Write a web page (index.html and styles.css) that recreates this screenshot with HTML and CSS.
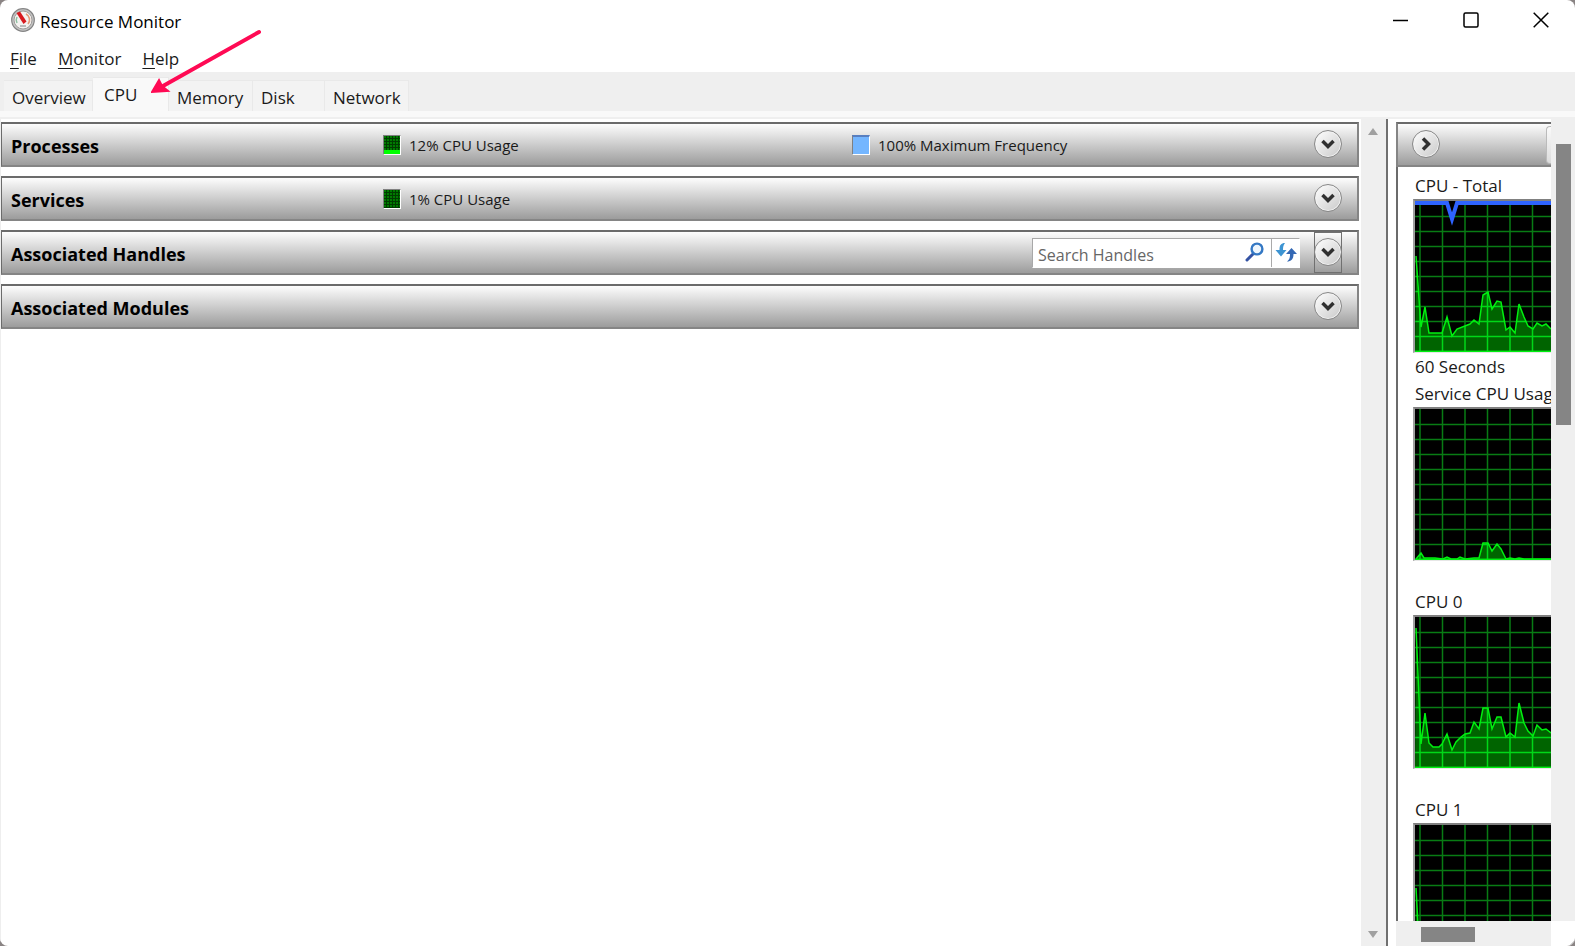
FILE: index.html
```
<!DOCTYPE html>
<html lang="en">
<head>
    <meta charset="UTF-8">
    <meta name="viewport" content="width=device-width, initial-scale=1.0">
    <title>Resource Monitor</title>
    <link rel="stylesheet" href="styles.css">
</head>
<body>

<div class="window">
    <header class="titlebar">
        <svg class="app-icon" width="24" height="24" viewBox="0 0 24 24">
            <circle cx="12" cy="12" r="11.3" fill="#c4c4c4" stroke="#858585" stroke-width="1.2"/>
            <circle cx="12" cy="12" r="9" fill="#f4f2f0" stroke="#a09c9a"/>
            <path d="M6 15a6.5 6.5 0 0 1 0-6" fill="none" stroke="#8cbfa0" stroke-width="1.5"/>
            <path d="M15 6a6.5 6.5 0 0 1 2 10" fill="none" stroke="#e59a78" stroke-width="1.6"/>
            <path d="M5.500 5l3.500-1.500 6.500 10-3 2.500z" fill="#d8191f"/>
            <path d="M9 18h6" stroke="#bbb" stroke-width="2"/>
        </svg>
        <h1>Resource Monitor</h1>
        <div class="window-buttons">
            <button aria-label="Minimize">
                <svg width="16" height="16"><path d="M0 8.500h15"/></svg>
            </button>
            <button aria-label="Maximize">
                <svg width="16" height="16"><rect x="1" y="1" width="14" height="14" rx="1.5"/></svg>
            </button>
            <button aria-label="Close">
                <svg width="16" height="16"><path d="M.7.7l14.6 14.6M15.3.7L.7 15.3"/></svg>
            </button>
        </div>
    </header>

    <nav class="menu">
        <a href="#"><u>F</u>ile</a>
        <a href="#"><u>M</u>onitor</a>
        <a href="#"><u>H</u>elp</a>
    </nav>

    <div class="tabs">
        <button class="tab tab-overview">Overview</button>
        <button class="tab tab-cpu active">CPU</button>
        <button class="tab tab-memory">Memory</button>
        <button class="tab tab-disk">Disk</button>
        <button class="tab tab-network">Network</button>
    </div>
    <div class="tab-edge"></div>

    <main class="content">
        <div class="sections">
            <section class="bar">
                <h2>Processes</h2>
                <div class="stat"><span class="meter meter-busy"></span>12% CPU Usage</div>
                <div class="stat"><span class="meter meter-blue"></span>100% Maximum Frequency</div>
                <button class="round" aria-label="Expand Processes"><svg width="16" height="16"><path d="M2.500 5l5.500 5.500L13.500 5"/></svg></button>
            </section>
            <section class="bar">
                <h2>Services</h2>
                <div class="stat"><span class="meter"></span>1% CPU Usage</div>
                <button class="round" aria-label="Expand Services"><svg width="16" height="16"><path d="M2.500 5l5.500 5.500L13.500 5"/></svg></button>
            </section>
            <section class="bar">
                <h2>Associated Handles</h2>
                <div class="search">
                    <input type="text" placeholder="Search Handles" aria-label="Search Handles">
                    <button class="search-go" aria-label="Search">
                        <svg width="20" height="20" viewBox="0 0 20 20">
                            <path d="M2 18l6-6" stroke="#3453a4" stroke-width="3" stroke-linecap="round"/>
                            <circle cx="12" cy="7" r="5.400" fill="#eef6fd" stroke="#3478c4" stroke-width="2.400"/>
                        </svg>
                    </button>
                    <button class="search-refresh" aria-label="Refresh">
                        <svg width="22" height="20" viewBox="0 0 22 20">
                            <path d="M10 1C6 1 4.500 3 4.500 8H.5l5.500 6.500L11.500 8H8C8 4.500 8.500 3 10 1z" fill="#3d94d2"/>
                            <path d="M12 19.500c4 0 6.500-2 6.500-7.500H22l-5.500-6L11 12h4c0 4-.5 5.500-3 7.500z" fill="#3468b4"/>
                        </svg>
                    </button>
                </div>
                <button class="round focused" aria-label="Expand Associated Handles"><svg width="16" height="16"><path d="M2.500 5l5.500 5.500L13.500 5"/></svg></button>
            </section>
            <section class="bar">
                <h2>Associated Modules</h2>
                <button class="round" aria-label="Expand Associated Modules"><svg width="16" height="16"><path d="M2.500 5l5.500 5.500L13.500 5"/></svg></button>
            </section>
        </div>

        <div class="scroll-left">
            <svg width="10" height="8"><path d="M5 0l5 7H0z"/></svg>
            <svg width="10" height="8"><path d="M0 0h10L5 7z"/></svg>
        </div>

        <aside class="side">
            <div class="graphs">
                <div class="graphs-head">
                    <button class="round" aria-label="Collapse graphs"><svg width="16" height="16"><path d="M5 2.500L10.500 8 5 13.500"/></svg></button>
                    <button class="views" aria-label="Views"></button>
                </div>
                <div class="graph-list">
                    <h3>CPU - Total</h3>
                    <div class="graph" data-points="1,55 6,126 10,106 14,132 27,132 32,116 37,135 42,128 55,123 59,119 64,123 68,94 73,91 77,108 82,100 86,101 91,129 95,126 100,132 104,103 109,116 113,125 118,128 122,122 127,125 131,123 136,128" data-frequency="0,2 32,2 37,18 42,2 136,2"></div>
                    <p>60 Seconds</p>
                    <h3>Service CPU Usage</h3>
                    <div class="graph" data-points="1,150 6,144 9,149 20,149 28,150 32,148 36,150 42,150 45,148 50,150 59,149 64,149 68,134 73,134 77,142 82,135 86,140 91,150 95,149 100,150 104,149 109,150 136,150"></div>
                    <p></p>
                    <h3>CPU 0</h3>
                    <div class="graph" data-points="1,11 6,127 10,96 14,126 18,130 24,130 27,127 32,117 37,133 41,125 46,120 50,117 55,116 59,105 64,112 68,91 73,91 77,112 82,100 86,100 91,120 95,116 100,120 104,86 109,106 113,114 118,119 122,108 127,113 131,112 136,116"></div>
                    <p></p>
                    <h3>CPU 1</h3>
                    <div class="graph" data-points="1,63 3,100 6,136 14,140 136,140"></div>
                </div>
            </div>
            <div class="scroll-right"><div class="thumb"></div></div>
            <div class="scroll-bottom"><div class="thumb"></div></div>
            <div class="corner"><svg width="6" height="6"><path d="M0 6l6-6v6z"/></svg></div>
        </aside>
    </main>

    <svg class="arrow" width="112" height="68" viewBox="0 0 112 68">
        <path d="M108 4L12 58" stroke-width="4" stroke-linecap="round"/>
        <path class="arrow-head" d="M1 64l7-12 3 6 6 5z"/>
    </svg>
</div>

<script>
    // Green grid every 15px down and 22.5px across, brighter under the curve
    let grid = '';
    for (let x = 5; x < 140; x += 22.5) {
        grid += `M${x} 0V151`;
    }
    for (let y = 15.5; y < 151; y += 15) {
        grid += `M0 ${y}H136`;
    }

    document.querySelectorAll('.graph').forEach((graph, i) => {
        const points = graph.dataset.points;
        const frequency = graph.dataset.frequency;
        const area = `0,151 ${points} 136,151`;
        graph.innerHTML = `
            <svg width="136" height="151">
                <clipPath id="under-${i}"><polygon points="${area}"/></clipPath>
                <path class="grid" d="${grid}"/>
                <polygon class="area" points="${area}"/>
                <path class="grid-bright" d="${grid}" clip-path="url(#under-${i})"/>
                <polyline class="line" points="${points}"/>
                <path class="line" d="M0 150.500H136"/>
                ${frequency ? `<polyline class="frequency" points="${frequency}"/>` : ''}
            </svg>
        `;
    });
</script>

</body>
</html>
```
FILE: styles.css
```
* {
    box-sizing: border-box;
}
body {
    margin: 0;
    font-family: "Open Sans", "Noto Sans", sans-serif;
    font-size: 17px;
    color: #1a1a1a;
    background: #8a8484;
}
h1, h2, h3, p {
    margin: 0;
    font-weight: normal;
}
button {
    padding: 0;
    border: 0;
    background: none;
    font: inherit;
    color: inherit;
}
.window {
    position: relative;
    display: flex;
    flex-direction: column;
    height: 100vh;
    overflow: hidden;
    background: white;
    border-radius: 8px;
}
.titlebar {
    display: flex;
    align-items: center;
    height: 40px;
    padding-left: 11px;
}
.titlebar h1 {
    margin-left: 5px;
    padding-top: 3px;
    font-size: 17px;
    color: black;
}
.window-buttons {
    display: flex;
    margin-left: auto;
}
.window-buttons button {
    width: 70px;
    height: 41px;
    padding-left: 2px;
}
.window-buttons svg {
    display: block;
    margin: auto;
    fill: none;
    stroke: black;
    stroke-width: 1.5;
}
.menu {
    display: flex;
    gap: 21px;
    height: 32px;
    padding-left: 10px;
    line-height: 38px;
}
.menu a {
    color: inherit;
    text-decoration: none;
}
.menu u {
    text-decoration-thickness: 1px;
    text-underline-offset: 3px;
}
.tabs {
    display: flex;
    align-items: flex-end;
    height: 39px;
    padding-left: 4px;
    background: #efefef;
}
.tab {
    height: 31px;
    padding-left: 8px;
    padding-top: 2px;
    text-align: left;
    background: #f3f3f3;
    border: 1px solid #e9e9e9;
    border-left-width: 0;
    border-bottom: 0;
}
.tab.active {
    height: 34px;
    padding-left: 11px;
    padding-top: 0;
    background: #f9f9f9;
}
.tab-overview {
    width: 89px;
}
.tab-cpu {
    width: 76px;
}
.tab-memory {
    width: 84px;
}
.tab-disk {
    width: 72px;
}
.tab-network {
    width: 84px;
}
.tab-edge {
    height: 8px;
    background: #f9f9f9;
    border-bottom: 2px solid #efefef;
}
.content {
    display: flex;
    flex: 1;
    min-height: 0;
    border-left: 1px solid #eee;
}
.sections {
    display: flex;
    flex: 1;
    flex-direction: column;
    gap: 9px;
    min-width: 0;
    padding-top: 3px;
    padding-right: 2px;
}
.bar, .graphs-head {
    display: flex;
    align-items: center;
    height: 45px;
    background: linear-gradient(#fdfdfd, #9c9c9c);
    border: 2px solid #858585;
    border-top-color: #6b6b6b;
}
.bar {
    padding-right: 15px;
    border-left: 1px solid #6b6b6b;
}
.bar h2 {
    flex: none;
    width: 381px;
    padding-left: 9px;
    padding-top: 2px;
    font-size: 18px;
    font-weight: bold;
    color: black;
}
.stat {
    display: flex;
    align-items: center;
    min-width: 120px;
    font-size: 15px;
    white-space: nowrap;
}
.stat + .stat {
    margin-left: 321px;
}
.bar h2 + .stat {
    width: 148px;
}
.meter {
    width: 18px;
    height: 20px;
    margin-right: 8px;
    border: 1px solid #808080;
    border-right-color: white;
    border-bottom-color: white;
    background: repeating-linear-gradient(90deg, transparent 0 2px, #003c00 2px 3px), repeating-linear-gradient(#007c00 0 2px, #003c00 2px 3px);
}
.meter-busy {
    background: linear-gradient(transparent 80%, #00ff00 80%), repeating-linear-gradient(90deg, transparent 0 2px, #003c00 2px 3px), repeating-linear-gradient(#007c00 0 2px, #003c00 2px 3px);
}
.meter-blue {
    background: #74b6ff;
    border-top: 2px solid #587fc0;
}
.round {
    flex: none;
    width: 28px;
    height: 28px;
    margin-bottom: 2px;
    border: 1px solid #888;
    border-radius: 50%;
    background: linear-gradient(135deg, white, #c9c9c9);
    box-shadow: inset 0 0 0 1px #f3f3f3;
}
.bar .round {
    margin-left: auto;
}
.round svg {
    display: block;
    margin: auto;
    fill: none;
    stroke: #303030;
    stroke-width: 3.5;
}
.bar .focused {
    margin-left: 14px;
    outline: 0;
    position: relative;
}
/* dotted keyboard focus box behind the round button */
.focused::before {
    content: "";
    position: absolute;
    z-index: -1;
    inset: -7px -1px -8px;
    border: 1px solid #707070;
}
.bar:has(.focused) {
    position: relative;
    z-index: 0;
}
.search {
    display: flex;
    align-items: center;
    width: 268px;
    height: 30px;
    margin-left: auto;
    background: white;
    border: 1px solid #a8a8a8;
    border-right-color: white;
    border-bottom-color: white;
}
.search input {
    flex: 1;
    min-width: 0;
    padding: 4px 0 0 5px;
    border: 0;
    outline: 0;
    background: none;
    font: inherit;
    font-size: 16px;
}
.search input::placeholder {
    color: #666;
    opacity: 1;
}
.search button {
    height: 28px;
    padding-bottom: 2px;
}
.search button svg {
    display: block;
    margin: auto;
}
.search-go {
    width: 32px;
}
.search-refresh {
    width: 28px;
    border-left: 1px solid #aaa;
}
.scroll-left {
    display: flex;
    flex: none;
    flex-direction: column;
    justify-content: space-between;
    align-items: center;
    width: 25px;
    padding: 9px 2px 7px 0;
    background: #efefef;
}
.scroll-left svg {
    fill: #a0a0a0;
}
.side {
    display: grid;
    flex: none;
    grid-template-columns: 155px 24px;
    grid-template-rows: 1fr 25px;
    padding-left: 8px;
    border-left: 2px solid #707070;
}
.graphs {
    min-height: 0;
    padding-top: 3px;
    overflow: hidden;
}
.graphs-head {
    justify-content: space-between;
    padding-left: 14px;
    border-right: 0;
}
.views {
    width: 5px;
    height: 38px;
    background: linear-gradient(#fafafa, #dcdcdc);
    border: 1px solid #bbb;
    border-right: 0;
    border-radius: 4px 0 0 4px;
}
.graph-list {
    padding-top: 6px;
    padding-left: 15px;
    border-left: 2px solid #6b6b6b;
}
.graph-list h3, .graph-list p {
    height: 26px;
    padding-left: 2px;
    font-size: 17px;
    line-height: 26px;
    white-space: nowrap;
}
.graph-list p {
    height: 28px;
    line-height: 28px;
}
.graph {
    height: 154px;
    background: black;
    border: 2px solid #808080;
    border-left-color: #a0a0a0;
    border-right: 0;
    border-bottom: 1px solid #e6e6e6;
    overflow: hidden;
}
.graph svg {
    display: block;
}
.grid, .grid-bright {
    fill: none;
    stroke: #087c14;
    stroke-width: 1.5;
}
.grid-bright {
    stroke: #00d818;
}
.area {
    fill: #006400;
}
.line {
    fill: none;
    stroke: #00f010;
    stroke-width: 1.5;
}
.frequency {
    fill: none;
    stroke: #2e63ff;
    stroke-width: 4;
}
.scroll-right {
    padding: 25px 4px 0 5px;
    background: #efefef;
}
.scroll-right .thumb {
    height: 281px;
    background: #858585;
}
.scroll-bottom {
    padding: 6px 0 0 25px;
    background: #efefef;
}
.scroll-bottom .thumb {
    width: 54px;
    height: 15px;
    background: #858585;
}
.corner {
    display: flex;
    align-items: flex-end;
    justify-content: flex-end;
    fill: #b0b0b0;
}
.arrow {
    position: absolute;
    left: 151px;
    top: 28px;
    fill: none;
    stroke: #ff0a54;
}
.arrow .arrow-head {
    fill: #ff0a54;
    stroke-width: 2;
}
```
